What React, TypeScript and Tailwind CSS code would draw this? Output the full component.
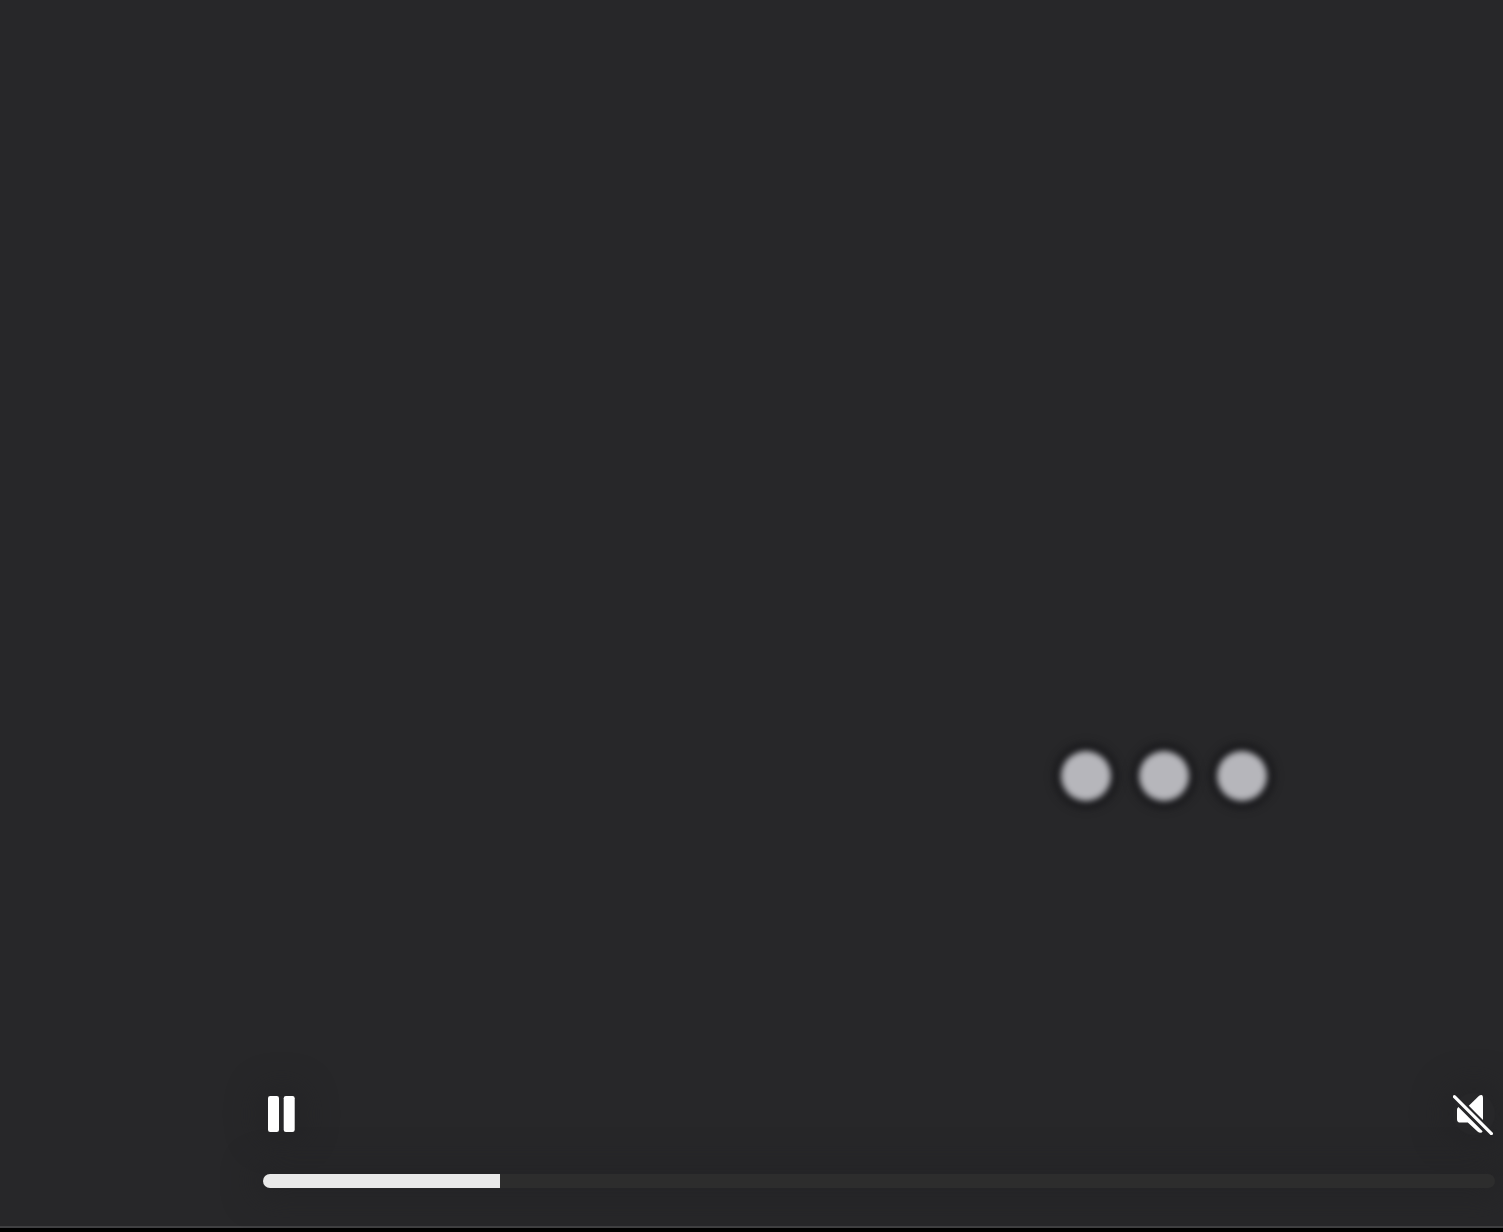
import { useState } from 'react';

const PauseIcon = () => (
  <svg viewBox="0 0 27 36" className="h-9 w-[27px] fill-white" aria-hidden="true">
    <rect x="0" y="0" width="11" height="36" rx="2.2" />
    <rect x="15.7" y="0" width="11" height="36" rx="2.2" />
  </svg>
);

const PlayIcon = () => (
  <svg viewBox="0 0 27 36" className="h-9 w-[27px] fill-white" aria-hidden="true">
    <path d="M0 2 Q0 0 2 1 L26 17 Q27 18 26 19 L2 35 Q0 36 0 34 Z" />
  </svg>
);

const MutedIcon = () => (
  <svg viewBox="1 -1 42 42" className="size-[42px] fill-white" aria-hidden="true">
    <path d="M16.8 11.7 L26.8 2 Q28.2 0.8 29.6 1 Q31 1.3 31 3.4 V25.9 Z" />
    <path d="M6.4 13 L30.6 37.2 Q30.2 38.8 28.3 38.8 Q27 38.8 25.8 37.8 L15.8 28.6 H8.4 Q5 28.6 5 25.2 V15.6 Q5 14 6.4 13 Z" />
    <path d="M2.4 2.6 L39.4 39.6" className="stroke-white" strokeWidth="3.2" strokeLinecap="round" />
  </svg>
);

const SoundIcon = () => (
  <svg viewBox="1 -1 42 42" className="size-[42px] fill-white" aria-hidden="true">
    <path d="M8.4 13 H15 L26.8 2 Q31 -1 31 3.4 V36 Q31 40 26.8 38 L15.8 28.6 H8.4 Q5 28.6 5 25.2 V16 Q5 13 8.4 13 Z" />
  </svg>
);

const TypingDots = () => (
  <div className="flex gap-7" role="img" aria-label="Typing">
    {[0, 1, 2].map((dot) => (
      <span
        key={dot}
        className="size-[50px] rounded-full bg-[#b6b6bb] shadow-[0_0_6px_6px_#131316] blur-[3px]"
      />
    ))}
  </div>
);

export default function App() {
  const [playing, setPlaying] = useState(true);
  const [muted, setMuted] = useState(true);
  const [progress, setProgress] = useState(19.2);

  return (
    <div className="flex min-h-screen flex-col bg-black">
      <main className="flex flex-1 flex-col border-b-2 border-[#404042] bg-[#272729]">
        <div className="flex flex-1 items-end justify-end pr-[236px] pb-[292px]">
          <TypingDots />
        </div>

        <div className="mr-2 mb-[38px] ml-[263px]">
          <div className="flex h-[42px] items-center justify-between pl-[5px]">
            <button
              type="button"
              aria-label={playing ? 'Pause' : 'Play'}
              onClick={() => setPlaying(!playing)}
              className="rounded-full shadow-[0_0_32px_8px_#242426]"
            >
              {playing ? <PauseIcon /> : <PlayIcon />}
            </button>
            <button
              type="button"
              aria-label={muted ? 'Unmute' : 'Mute'}
              onClick={() => setMuted(!muted)}
              className="rounded-full shadow-[0_0_32px_8px_#242426]"
            >
              {muted ? <MutedIcon /> : <SoundIcon />}
            </button>
          </div>

          <div className="relative mt-[39px] h-[14px] rounded-full shadow-[0_0_32px_8px_#242426]">
            <div className="h-full overflow-hidden rounded-full bg-[#2d2d2d]">
              <div className="h-full bg-[#e9e9e9]" style={{ width: `${progress}%` }} />
            </div>
            <input
              type="range"
              aria-label="Seek"
              min={0}
              max={100}
              step={0.1}
              value={progress}
              onChange={(e) => setProgress(Number(e.target.value))}
              className="absolute inset-0 h-full w-full cursor-pointer opacity-0"
            />
          </div>
        </div>
      </main>
      <div className="h-1" />
    </div>
  );
}
